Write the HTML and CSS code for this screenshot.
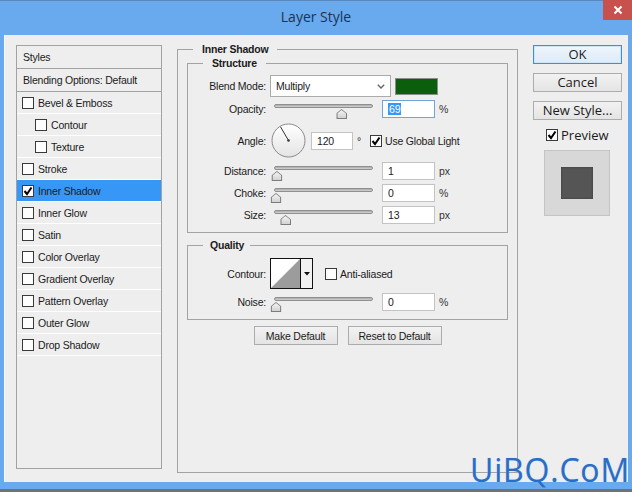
FILE: index.html
```html
<!DOCTYPE html>
<html lang="en">
<head>
    <meta charset="UTF-8">
    <title>Layer Style</title>
    <link rel="stylesheet" href="styles.css">
</head>
<body>

<div class="window">
    <div class="titlebar">
        <span class="title">Layer Style</span>
        <span class="close-btn">
            <svg width="10" height="10" viewBox="0 0 10 10"><path d="M1.5 1.5 L8.5 8.5 M8.5 1.5 L1.5 8.5" stroke="#fff" stroke-width="2" fill="none"/></svg>
        </span>
    </div>

    <div class="client">
        <!-- Effects list -->
        <ul class="styles-list">
            <li class="head">Styles</li>
            <li class="head">Blending Options: Default</li>
            <li><span class="check"></span>Bevel &amp; Emboss</li>
            <li class="sub"><span class="check"></span>Contour</li>
            <li class="sub"><span class="check"></span>Texture</li>
            <li><span class="check"></span>Stroke</li>
            <li class="active"><span class="check"><svg width="10" height="10" viewBox="0 0 10 10"><path d="M1.5 5 L4 8 L8.5 1.5" stroke="#000" stroke-width="2" fill="none"/></svg></span>Inner Shadow</li>
            <li><span class="check"></span>Inner Glow</li>
            <li><span class="check"></span>Satin</li>
            <li><span class="check"></span>Color Overlay</li>
            <li><span class="check"></span>Gradient Overlay</li>
            <li><span class="check"></span>Pattern Overlay</li>
            <li><span class="check"></span>Outer Glow</li>
            <li><span class="check"></span>Drop Shadow</li>
        </ul>

        <!-- Inner Shadow settings -->
        <fieldset class="group main-group">
            <legend>Inner Shadow</legend>

            <fieldset class="group structure">
                <legend>Structure</legend>

                <div class="row blend-row">
                    <label>Blend Mode:</label>
                    <div class="select">
                        <span>Multiply</span>
                        <svg width="8" height="5" viewBox="0 0 8 5"><path d="M0.8 0.8 L4 4 L7.2 0.8" stroke="#666" stroke-width="1.4" fill="none"/></svg>
                    </div>
                    <div class="swatch"></div>
                </div>

                <div class="row">
                    <label>Opacity:</label>
                    <div class="slider"><div class="track"></div><div class="thumbs"><span class="thumb" style="left: 69%"></span></div></div>
                    <div class="field focused"><span class="sel">69</span></div>
                    <span class="unit">%</span>
                </div>

                <div class="row angle-row">
                    <label>Angle:</label>
                    <svg class="dial" width="35" height="35" viewBox="0 0 35 35">
                        <defs>
                            <linearGradient id="dialFill" x1="0" y1="0" x2="0" y2="1">
                                <stop offset="0" stop-color="#ffffff"/>
                                <stop offset="1" stop-color="#e4e4e4"/>
                            </linearGradient>
                        </defs>
                        <circle cx="17.5" cy="17.5" r="16.5" fill="url(#dialFill)" stroke="#8a8a8a"/>
                        <path d="M17.5 17.5 L9.5 3.8" stroke="#333" stroke-width="1"/>
                        <circle cx="17.5" cy="17.5" r="1.3" fill="#333"/>
                    </svg>
                    <div class="field small">120</div>
                    <span class="degree">°</span>
                    <span class="check on"><svg width="10" height="10" viewBox="0 0 10 10"><path d="M1.5 5 L4 8 L8.5 1.5" stroke="#000" stroke-width="2" fill="none"/></svg></span>
                    <span class="check-label">Use Global Light</span>
                </div>

                <div class="row">
                    <label>Distance:</label>
                    <div class="slider"><div class="track"></div><div class="thumbs"><span class="thumb" style="left: 1%"></span></div></div>
                    <div class="field">1</div>
                    <span class="unit">px</span>
                </div>

                <div class="row">
                    <label>Choke:</label>
                    <div class="slider"><div class="track"></div><div class="thumbs"><span class="thumb" style="left: 0%"></span></div></div>
                    <div class="field">0</div>
                    <span class="unit">%</span>
                </div>

                <div class="row">
                    <label>Size:</label>
                    <div class="slider"><div class="track"></div><div class="thumbs"><span class="thumb" style="left: 10%"></span></div></div>
                    <div class="field">13</div>
                    <span class="unit">px</span>
                </div>
            </fieldset>

            <fieldset class="group quality">
                <legend>Quality</legend>

                <div class="row contour-row">
                    <label>Contour:</label>
                    <div class="contour">
                        <svg width="29" height="29" viewBox="0 0 29 29"><rect width="29" height="29" fill="#fff"/><path d="M0 29 L29 0 L29 29 Z" fill="#9c9c9c"/></svg>
                        <span class="contour-arrow"><svg width="6" height="4" viewBox="0 0 6 4"><path d="M0 0 H6 L3 3.5 Z" fill="#111"/></svg></span>
                    </div>
                    <span class="check aa"></span>
                    <span class="check-label">Anti-aliased</span>
                </div>

                <div class="row">
                    <label>Noise:</label>
                    <div class="slider"><div class="track"></div><div class="thumbs"><span class="thumb" style="left: 0%"></span></div></div>
                    <div class="field">0</div>
                    <span class="unit">%</span>
                </div>
            </fieldset>

            <div class="btn-row">
                <button class="btn make-default">Make Default</button>
                <button class="btn reset-default">Reset to Default</button>
            </div>
        </fieldset>

        <!-- Dialog buttons -->
        <div class="side">
            <button class="side-btn ok-btn">OK</button>
            <button class="side-btn">Cancel</button>
            <button class="side-btn">New Style...</button>
            <div class="preview-check">
                <span class="check"><svg width="10" height="10" viewBox="0 0 10 10"><path d="M1.5 5 L4 8 L8.5 1.5" stroke="#000" stroke-width="2" fill="none"/></svg></span>
                <span>Preview</span>
            </div>
            <div class="preview-box"><div class="preview-square"></div></div>
        </div>
    </div>

    <div class="watermark">UiBQ.CoM</div>
</div>

</body>
</html>
```

FILE: styles.css
```css
/* Page */
html, body {
    margin: 0;
    padding: 0;
    width: 632px;
    height: 492px;
    overflow: hidden;
}

body {
    font-family: "Liberation Sans", Arial, sans-serif;
    font-size: 10.5px;
    letter-spacing: -0.2px;
    color: #1b1b1b;
}

/* Window frame */
.window {
    position: relative;
    width: 632px;
    height: 492px;
    box-sizing: border-box;
    background: #69a9ee;
    border-top: 1px solid #5a88bd;
    border-bottom: 3px solid #727272;
    display: flex;
    flex-direction: column;
}

.titlebar {
    height: 34px;
    display: grid;
    grid-template-columns: 1fr auto 1fr;
}

.title {
    grid-column: 2;
    font-family: "Open Sans", sans-serif;
    font-size: 14px;
    letter-spacing: 0;
    line-height: 32px;
    color: #1c3350;
}

.close-btn {
    grid-column: 3;
    justify-self: end;
    width: 29px;
    height: 20px;
    margin-top: -1px;
    background: #c8514d;
    display: flex;
    align-items: center;
    justify-content: center;
}

.client {
    margin: 0 4px;
    height: 447px;
    box-sizing: border-box;
    background: #eeeeee;
    border-left: 1px solid #f7f7f7;
    padding: 8px 0 0 11px;
    display: flex;
    align-items: flex-start;
}

/* Styles list */
.styles-list {
    list-style: none;
    margin: 2px 0 0 0;
    padding: 0;
    width: 146px;
    height: 424px;
    box-sizing: border-box;
    border: 1px solid #a2a2a2;
}

.styles-list li {
    height: 21px;
    border-bottom: 1px solid #ffffff;
    display: flex;
    align-items: center;
    padding-left: 5px;
}

.styles-list li.head {
    height: 22px;
    border-bottom: 1px solid #a2a2a2;
    padding-left: 6px;
}

.styles-list li.sub {
    padding-left: 18px;
}

.styles-list li.active {
    background: #3797f6;
}

.styles-list .check {
    margin-right: 4px;
}

/* Checkboxes */
.check {
    width: 12px;
    height: 12px;
    box-sizing: border-box;
    border: 1px solid #3a3a3a;
    background: #fdfdfd;
    display: inline-flex;
    align-items: center;
    justify-content: center;
    flex-shrink: 0;
}

.check-label {
    margin-left: 3px;
}

/* Group boxes */
.group {
    margin: 0;
    padding: 0;
    border: 1px solid #a3a3a3;
    min-width: 0;
}

.group legend {
    margin-left: 15px;
    padding: 0 9px;
    font-weight: bold;
    line-height: 13px;
}

.main-group {
    margin-left: 15px;
    width: 341px;
    height: 430px;
    box-sizing: border-box;
}

.structure,
.quality {
    margin: 0 9px;
}

.structure {
    margin-top: 1px;
    padding: 5px 0 8px;
}

.quality {
    margin-top: 6px;
    padding: 6px 0 8px;
}

.quality legend {
    padding: 0 6px 0 7px;
}

/* Setting rows */
.row {
    display: flex;
    align-items: center;
    height: 18px;
    margin-top: 4px;
}

.row label {
    width: 78px;
    text-align: right;
    flex-shrink: 0;
}

.blend-row {
    height: 22px;
    margin-top: 0;
}

.structure .blend-row + .row {
    margin-top: 3px;
}

.angle-row {
    height: 35px;
    margin-top: 5px;
}

.contour-row {
    height: 31px;
    margin-top: 0;
}

.select {
    margin-left: 4px;
    width: 121px;
    height: 22px;
    box-sizing: border-box;
    border: 1px solid #ababab;
    background: #fff;
    display: flex;
    align-items: center;
    justify-content: space-between;
    padding: 0 5px 0 5px;
}

.swatch {
    margin-left: 4px;
    width: 43px;
    height: 17px;
    box-sizing: border-box;
    border: 1px solid #8c8c8c;
    background: #0b5e0b;
}

/* Sliders */
.slider {
    position: relative;
    margin-left: 8px;
    width: 99px;
    height: 18px;
}

.track {
    margin-top: 4px;
    height: 4px;
    border-radius: 2px;
    box-sizing: border-box;
    border: 1px solid #8f8f8f;
    background: linear-gradient(#a9a9a9, #d4d4d4);
}

.thumbs {
    position: relative;
    margin: 0 2px;
    height: 0;
}

.thumb {
    position: absolute;
    top: 1px;
    width: 11px;
    height: 10px;
    transform: translateX(-50%);
    background: #7c7c7c;
    clip-path: polygon(0 45%, 50% 0, 100% 45%, 100% 100%, 0 100%);
}

.thumb::after {
    content: "";
    position: absolute;
    inset: 1px;
    background: linear-gradient(#f4f4f4, #d2d2d2);
    clip-path: polygon(0 45%, 50% 0, 100% 45%, 100% 100%, 0 100%);
}

/* Number fields */
.field {
    margin-left: 9px;
    width: 53px;
    height: 18px;
    box-sizing: border-box;
    border: 1px solid #c3c3c3;
    background: #fff;
    padding-left: 5px;
    line-height: 16px;
}

.field.focused {
    border-color: #6fa4d9;
}

.field .sel {
    background: #3399ff;
    color: #fff;
    padding: 0 1px;
}

.field.small {
    margin-left: 5px;
    width: 42px;
}

.unit {
    margin-left: 4px;
    color: #333;
}

.dial {
    margin-left: 5px;
    flex-shrink: 0;
}

.degree {
    margin-left: 4px;
}

.angle-row .check {
    margin-left: 9px;
}

/* Contour picker */
.contour {
    margin-left: 4px;
    height: 31px;
    box-sizing: border-box;
    border: 1px solid #111;
    box-shadow: inset 0 0 0 1px #555;
    display: flex;
    padding: 0;
}

.contour svg {
    display: block;
}

.contour-arrow {
    width: 11px;
    border-left: 1px solid #111;
    background: #f2f2f2;
    display: flex;
    align-items: center;
    justify-content: center;
}

.check.aa {
    margin-left: 12px;
}

/* Buttons */
.btn-row {
    margin-top: 6px;
    display: flex;
    justify-content: center;
    gap: 10px;
}

.btn {
    height: 19px;
    padding: 0;
    font-family: "Liberation Sans", Arial, sans-serif;
    font-size: 10.5px;
    letter-spacing: -0.2px;
    color: #1b1b1b;
    border: 1px solid #acacac;
    background: linear-gradient(#f2f2f2, #e4e4e4);
}

.make-default {
    width: 84px;
}

.reset-default {
    width: 94px;
}

.side {
    margin: 2px 0 0 15px;
    width: 89px;
    display: flex;
    flex-direction: column;
}

.side-btn {
    height: 19px;
    margin-bottom: 9px;
    padding: 0;
    font-family: "Open Sans", sans-serif;
    font-size: 13px;
    line-height: 15px;
    color: #1b1b1b;
    border: 1px solid #acacac;
    background: linear-gradient(#f2f2f2, #e4e4e4);
}

.ok-btn {
    border-color: #3c8fd8;
    box-shadow: inset 0 0 0 1px #cfe4f7;
    background: linear-gradient(#eef5fc, #dfebf7);
}

.preview-check {
    display: flex;
    align-items: center;
    margin: 0 0 9px 13px;
    font-family: "Open Sans", sans-serif;
    font-size: 13px;
    letter-spacing: 0;
    line-height: 12px;
    height: 12px;
}

.preview-check .check {
    margin-right: 3px;
}

.preview-box {
    margin-left: 11px;
    width: 66px;
    height: 66px;
    box-sizing: border-box;
    border: 1px solid #c4c4c4;
    background: #d8d8d8;
    display: flex;
    align-items: center;
    justify-content: center;
}

.preview-square {
    width: 32px;
    height: 32px;
    background: #555555;
    box-shadow: inset 0 0 2px #333;
}

/* Watermark */
.watermark {
    position: absolute;
    right: 2px;
    bottom: -2px;
    font-family: "Open Sans", sans-serif;
    font-size: 32px;
    line-height: normal;
    color: #2b6dc5;
    letter-spacing: 0.8px;
    text-shadow: 0 0 1px #9cc4f0;
}
```
